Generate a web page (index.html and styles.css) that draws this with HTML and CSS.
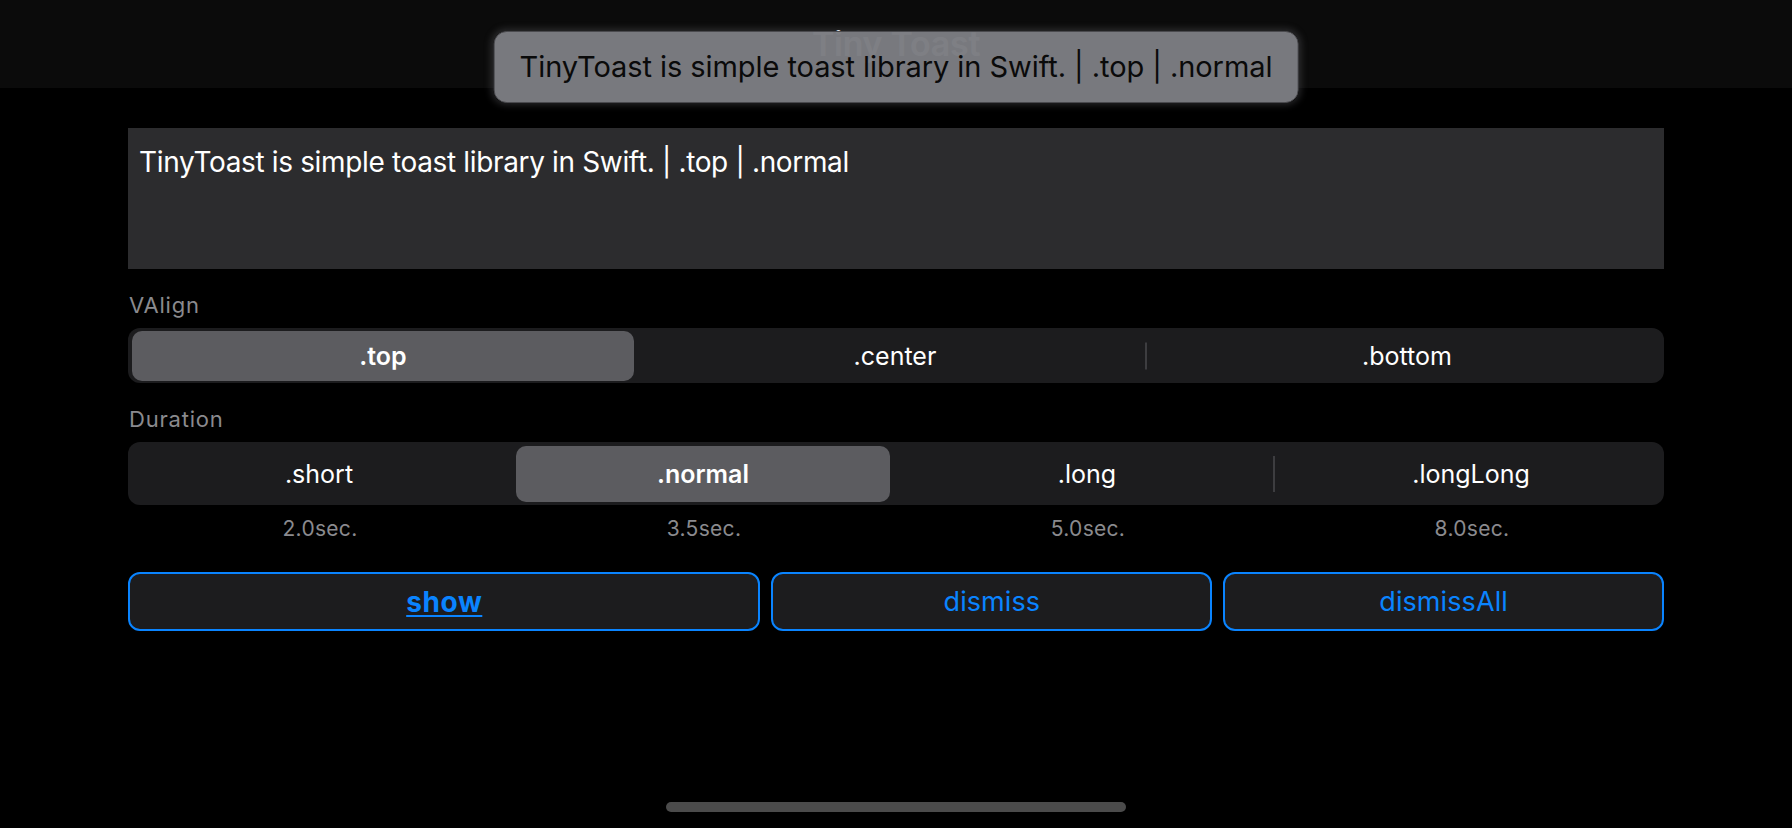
FILE: index.html
```html
<!DOCTYPE html>
<html lang="en">
<head>
<meta charset="utf-8">
<title>TinyToast</title>
<link rel="stylesheet" href="styles.css">
</head>
<body>
<div class="screen">
  <header class="navbar">
    <h1 class="nav-title">Tiny Toast</h1>
  </header>

  <div class="toast">TinyToast is simple toast library in Swift. | .top | .normal</div>

  <main class="content">
    <div class="text-view">TinyToast is simple toast library in Swift. | .top | .normal</div>

    <div class="section-label">VAlign</div>
    <div class="segmented seg-valign">
      <div class="segment selected">.top</div>
      <div class="segment">.center</div>
      <div class="segment divided">.bottom</div>
    </div>

    <div class="section-label">Duration</div>
    <div class="segmented seg-duration">
      <div class="segment">.short</div>
      <div class="segment selected">.normal</div>
      <div class="segment">.long</div>
      <div class="segment divided">.longLong</div>
    </div>

    <div class="seconds-row">
      <span class="seconds">2.0sec.</span>
      <span class="seconds">3.5sec.</span>
      <span class="seconds">5.0sec.</span>
      <span class="seconds">8.0sec.</span>
    </div>

    <div class="actions">
      <button class="action-btn primary">show</button>
      <button class="action-btn">dismiss</button>
      <button class="action-btn">dismissAll</button>
    </div>
  </main>

  <div class="home-indicator"></div>
</div>
</body>
</html>
```

FILE: styles.css
```css
* {
  box-sizing: border-box;
}

html, body {
  margin: 0;
  padding: 0;
  background: #000;
}

body {
  font-family: Inter, "Noto Sans", "DejaVu Sans", sans-serif;
  color: #fff;
}

.screen {
  position: relative;
  width: 1792px;
  height: 828px;
  background: #000;
  display: flex;
  flex-direction: column;
  overflow: hidden;
}

.navbar {
  height: 88px;
  flex: none;
  background: #0b0b0b;
  display: flex;
  align-items: center;
  justify-content: center;
}

.nav-title {
  margin: 0;
  font-size: 34px;
  font-weight: 600;
  line-height: 40px;
  color: #fff;
  letter-spacing: -0.3px;
}

.toast {
  position: absolute;
  top: 31px;
  left: 50%;
  transform: translateX(-50%);
  height: 72px;
  padding: 0 25px;
  display: flex;
  align-items: center;
  white-space: nowrap;
  background: rgba(123, 124, 129, 0.975);
  border: 1.5px solid #4a4a4e;
  border-radius: 13px;
  box-shadow: 0 0 7px 2px rgba(110, 110, 115, 0.35);
  color: #0a0a0a;
  font-size: 29px;
  line-height: 36px;
  letter-spacing: -0.07px;
}

.content {
  padding: 40px 128px 0;
  display: flex;
  flex-direction: column;
}

.text-view {
  height: 141px;
  background: #2c2c2e;
  padding: 17px 11px 0;
  font-size: 28px;
  line-height: 34px;
  color: #fff;
  letter-spacing: -0.35px;
}

.section-label {
  margin-top: 23px;
  height: 26px;
  font-size: 22px;
  line-height: 26px;
  color: #8a8a8e;
  padding-left: 1px;
  letter-spacing: 0.8px;
}

.segmented {
  margin-top: 10px;
  display: flex;
  background: #1c1c1e;
  border-radius: 12px;
}

.seg-valign {
  height: 55px;
}

.seg-duration {
  height: 63px;
}

.segment {
  position: relative;
  flex: 1 1 0;
  margin: 3px 6px 2px 4px;
  display: flex;
  align-items: center;
  justify-content: center;
  font-size: 25px;
  font-weight: 400;
  color: #fff;
  border-radius: 10px;
  letter-spacing: 0;
}

.seg-duration .segment {
  margin-top: 4px;
  margin-bottom: 3px;
}

.segment.selected {
  background: #5c5c60;
  font-weight: 600;
}

.segment.divided::before {
  content: "";
  position: absolute;
  left: -11px;
  top: 50%;
  width: 1.5px;
  background: #3d3d40;
  transform: translateY(-50%);
}

.seg-valign .segment.divided::before {
  height: 27px;
}

.seg-duration .segment.divided::before {
  height: 36px;
}

.seconds-row {
  margin-top: 11px;
  height: 26px;
  display: grid;
  grid-template-columns: repeat(4, 1fr);
}

.seconds {
  text-align: center;
  font-size: 21px;
  line-height: 26px;
  color: #8a8a8e;
  letter-spacing: 0.3px;
}

.actions {
  margin-top: 30px;
  display: grid;
  grid-template-columns: 1.435fr 1fr 1fr;
  column-gap: 11px;
}

.action-btn {
  height: 59px;
  background: #1c1c1e;
  border: 2px solid #0a84ff;
  border-radius: 12px;
  color: #0a84ff;
  font-family: Inter, "Noto Sans", "DejaVu Sans", sans-serif;
  font-size: 27px;
  font-weight: 400;
  padding: 0;
  letter-spacing: 0.1px;
}

.action-btn.primary {
  font-size: 28px;
  font-weight: 700;
  letter-spacing: 0.6px;
  text-decoration: underline;
  text-underline-offset: 3px;
  text-decoration-thickness: 2px;
}

.home-indicator {
  margin: auto auto 16px;
  width: 460px;
  height: 10px;
  border-radius: 5px;
  background: #4b4b4b;
}
```
